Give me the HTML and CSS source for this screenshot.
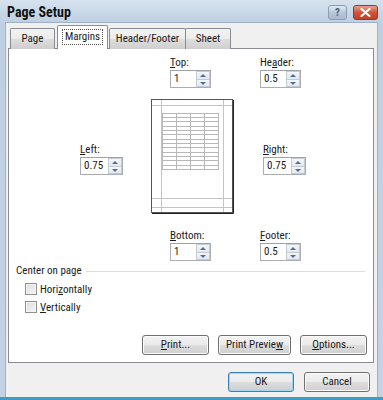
FILE: index.html
```html
<!DOCTYPE html>
<html>
<head>
<meta charset="utf-8">
<link rel="stylesheet" href="styles.css">
</head>
<body>
<div class="window">
  <div class="titlebar">
    <span class="title">Page Setup</span>
    <div class="caption-btns">
      <span class="cbtn help">?</span>
      <span class="cbtn close"><svg width="11" height="9" viewBox="0 0 11 9"><path d="M1.5 1 L9.5 8 M9.5 1 L1.5 8" stroke="#fff" stroke-width="2.2" stroke-linecap="round"/></svg></span>
    </div>
  </div>
  <div class="client">
    <div class="tabs">
      <span class="tab t-page">Page</span>
      <span class="tab active"><span class="focus">Margins</span></span>
      <span class="tab t-hf">Header/Footer</span>
      <span class="tab t-sheet">Sheet</span>
    </div>
    <div class="panel">
      <div class="row row-top">
        <div class="field"><label><u>T</u>op:</label><div class="spin"><span class="val">1</span><span class="arrows"><i class="up"></i><i class="dn"></i></span></div></div>
        <div class="field"><label>He<u>a</u>der:</label><div class="spin"><span class="val">0.5</span><span class="arrows"><i class="up"></i><i class="dn"></i></span></div></div>
      </div>
      <div class="row row-mid">
        <div class="field side"><label><u>L</u>eft:</label><div class="spin wide"><span class="val">0.75</span><span class="arrows"><i class="up"></i><i class="dn"></i></span></div></div>
        <svg class="preview" width="84" height="116" viewBox="0 0 84 116">
          <rect x="0.5" y="0.5" width="81" height="113" fill="#fff" stroke="#555"/>
          <path d="M82.5 1 V114.5 H1" fill="none" stroke="#222" stroke-width="1"/>
          <g stroke="#c4c4c4" stroke-width="1" fill="none">
            <path d="M10.5 1 V113 M72.5 1 V113"/>
            <path d="M1 6.5 H81 M1 99.5 H81 M1 108.5 H81"/>
          </g>
          <g stroke="#b8b8b8" stroke-width="1" fill="none">
            <rect x="11.5" y="14.5" width="56" height="56"/>
            <path d="M25.5 14.5 V70.5 M39.5 14.5 V70.5 M53.5 14.5 V70.5"/>
            <path d="M11.5 18.5 H67.5 M11.5 22.5 H67.5 M11.5 27.5 H67.5 M11.5 31.5 H67.5 M11.5 35.5 H67.5 M11.5 40.5 H67.5 M11.5 44.5 H67.5 M11.5 48.5 H67.5 M11.5 53.5 H67.5 M11.5 57.5 H67.5 M11.5 61.5 H67.5 M11.5 66.5 H67.5"/>
          </g>
        </svg>
        <div class="field side"><label><u>R</u>ight:</label><div class="spin wide"><span class="val">0.75</span><span class="arrows"><i class="up"></i><i class="dn"></i></span></div></div>
      </div>
      <div class="row row-bot">
        <div class="field"><label><u>B</u>ottom:</label><div class="spin"><span class="val">1</span><span class="arrows"><i class="up"></i><i class="dn"></i></span></div></div>
        <div class="field"><label><u>F</u>ooter:</label><div class="spin"><span class="val">0.5</span><span class="arrows"><i class="up"></i><i class="dn"></i></span></div></div>
      </div>
      <div class="group">
        <span class="group-label">Center on page</span>
        <span class="group-line"></span>
      </div>
      <div class="checks">
        <div class="check"><span class="box"></span><span>Hori<u>z</u>ontally</span></div>
        <div class="check"><span class="box"></span><span><u>V</u>ertically</span></div>
      </div>
      <div class="panel-btns">
        <span class="btn"><u>P</u>rint...</span>
        <span class="btn">Print Previe<u>w</u></span>
        <span class="btn"><u>O</u>ptions...</span>
      </div>
    </div>
    <div class="dialog-btns">
      <span class="btn default">OK</span>
      <span class="btn">Cancel</span>
    </div>
  </div>
</div>
</body>
</html>
```

FILE: styles.css
```css
* { box-sizing: border-box; }
html, body { margin: 0; padding: 0; }
body {
  width: 383px;
  height: 400px;
  overflow: hidden;
  font-family: "Roboto", "Noto Sans", sans-serif;
  font-stretch: condensed;
  font-size: 11px;
  color: #1a1a1a;
  background: #fff;
}
.window {
  width: 383px;
  height: 400px;
  display: flex;
  flex-direction: column;
  background: linear-gradient(#d6e2ee, #bfd0e2 22px, #c3d3e4);
  border-bottom: 3px solid #3f9cc4;
}
.titlebar {
  height: 22px;
  display: flex;
  align-items: center;
  justify-content: space-between;
  padding: 0 5px 0 7px;
}
.title {
  font-weight: bold;
  font-size: 14px;
  color: #111;
  padding-top: 1px;
}
.caption-btns { display: flex; gap: 6px; align-items: center; padding-top: 2px; }
.cbtn {
  height: 15px;
  border-radius: 3px;
  display: flex;
  align-items: center;
  justify-content: center;
}
.help {
  width: 19px;
  background: linear-gradient(#dfe8f1, #b5c6d8 55%, #a9bcd0);
  border: 1px solid #8a9db3;
  color: #4d6580;
  font-weight: bold;
  font-size: 11px;
}
.close {
  width: 25px;
  background: linear-gradient(#e8a290, #d0543b 50%, #c1402a);
  border: 1px solid #8e3a2c;
}
.client {
  flex: 1;
  margin: 0 5px 0 5px;
  background: #f0f0f0;
  border: 1px solid #9fb1c5;
  border-bottom: none;
  display: flex;
  flex-direction: column;
  padding: 2px 3px 0 2px;
}
.tabs {
  display: flex;
  align-items: flex-end;
  height: 24px;
  padding-left: 2px;
  position: relative;
  z-index: 1;
  margin-bottom: -1px;
}
.tab {
  height: 21px;
  display: flex;
  align-items: center;
  justify-content: center;
  border: 1px solid #898c95;
  border-bottom: none;
  border-radius: 2px 2px 0 0;
  background: linear-gradient(#f3f3f3, #ebebeb 50%, #dddddd 51%, #cfcfcf);
  padding-bottom: 1px;
}
.t-page { width: 45px; }
.t-hf { width: 77px; }
.t-sheet { width: 46px; margin-left: -1px; }
.tab.active {
  height: 24px;
  width: 51px;
  background: #fff;
  margin: 0 1px 0 2px;
  padding-bottom: 2px;
}
.focus {
  border: 1px dotted #555;
  padding: 0 2px;
  line-height: 14px;
}
.panel {
  background: #fff;
  border: 1px solid #898c95;
  height: 315px;
  display: flex;
  flex-direction: column;
}
.row { display: flex; }
.row-top { padding: 7px 0 0 161px; gap: 49px; }
.row-mid { padding: 11px 0 0 71px; gap: 28px; align-items: center; }
.row-bot { padding: 14px 0 0 161px; gap: 49px; }
.field { display: flex; flex-direction: column; }
.field label { line-height: 14px; height: 14px; }
.field.side { margin-top: 4px; }
.spin {
  width: 41px;
  height: 18px;
  border: 1px solid #abadb3;
  border-top-color: #a0a2aa;
  display: flex;
  align-items: center;
  background: #fff;
}
.spin.wide { width: 43px; }
.val { flex: 1; padding-left: 3px; line-height: 14px; }
.arrows {
  width: 14px;
  height: 16px;
  display: flex;
  flex-direction: column;
}
.arrows i {
  flex: 1;
  position: relative;
  border: 1px solid #c5cbd2;
  background: linear-gradient(#f4f6f8, #e4e8ed);
}
.arrows i.up { border-bottom: none; }
.arrows i::after {
  content: "";
  position: absolute;
  left: 3px;
  top: 2px;
  border-left: 3px solid transparent;
  border-right: 3px solid transparent;
}
.arrows i.up::after { border-bottom: 3px solid #4a6fa0; }
.arrows i.dn::after { border-top: 3px solid #4a6fa0; }
.preview { display: block; }
.group {
  display: flex;
  align-items: center;
  padding: 1px 8px 0 7px;
  gap: 4px;
  height: 18px;
}
.group-label { line-height: 14px; }
.group-line { flex: 1; height: 1px; background: #dcdcdc; margin-top: 1px; }
.checks { display: flex; flex-direction: column; gap: 6px; padding: 4px 0 0 16px; }
.check { display: flex; align-items: center; gap: 3px; height: 12px; }
.box {
  width: 12px;
  height: 12px;
  border: 1px solid #8f8f8f;
  background: linear-gradient(135deg, #dcdcdc, #f6f6f6);
  box-shadow: inset 0 0 0 1px #f4f4f4;
}
.panel-btns {
  display: flex;
  justify-content: flex-end;
  gap: 9px;
  padding: 22px 6px 0 0;
}
.btn {
  height: 20px;
  border: 1px solid #707070;
  border-radius: 3px;
  background: linear-gradient(#f2f2f2, #ebebeb 50%, #dddddd 51%, #cfcfcf);
  box-shadow: inset 0 0 0 1px #fbfbfb;
  display: flex;
  align-items: center;
  justify-content: center;
  line-height: 14px;
}
.panel-btns .btn { width: 67px; }
.panel-btns .btn:nth-child(2) { width: 73px; }
.dialog-btns {
  display: flex;
  justify-content: flex-end;
  gap: 10px;
  padding: 9px 4px 0 0;
}
.dialog-btns .btn { width: 66px; }
.btn.default { border-color: #3c7fb1; box-shadow: inset 0 0 0 1px #9fd5f5; }
u { text-decoration: underline; text-underline-offset: 1px; }
```
